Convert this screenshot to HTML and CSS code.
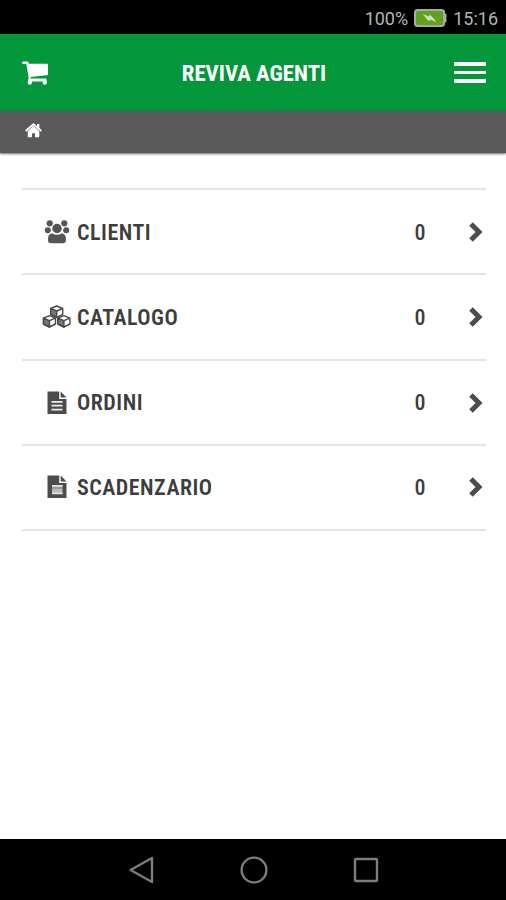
FILE: index.html
```html
<!DOCTYPE html>
<html lang="it">
<head>
    <meta charset="UTF-8">
    <meta name="viewport" content="width=device-width, initial-scale=1.0">
    <title>Reviva Agenti</title>
    <link rel="stylesheet" href="styles.css">
</head>
<body>
    <div class="status-bar">
        <span>100%</span>
        <svg class="battery" width="33" height="18" viewBox="0 0 33 18">
            <rect x="1" y="1" width="29" height="16" rx="2.5" fill="#5fa31c" stroke="#aaa" stroke-width="2"/>
            <path d="M31 5h1v8h-1z" fill="#aaa" stroke="#aaa"/>
            <path d="M8.500 5l6.500 2.500 1-2 6.500 7.500-6.500-2.500-1 2z" fill="#d5dccb"/>
        </svg>
        <span>15:16</span>
    </div>

    <header class="header">
        <a href="#" class="cart" aria-label="Carrello">
            <svg width="28" height="25" viewBox="0 0 28 25" fill="#fff">
                <path d="M1 .5h4.500q1 0 1.300 2.300H25q1 0 1 1V13q0 1-1 1.200L8.500 16l.2 1.500H23.500q1 0 1 1v2H7q-1.100 0-1-1.300l.7-2L4.300 3H1Q0 3 0 2T1 .5z"/>
                <circle cx="7.800" cy="21.500" r="2.200"/>
                <circle cx="22.800" cy="21.500" r="2.200"/>
            </svg>
        </a>
        <h1>REVIVA AGENTI</h1>
        <a href="#" class="menu" aria-label="Menu">
            <span></span>
            <span></span>
            <span></span>
        </a>
    </header>

    <nav class="breadcrumb">
        <a href="#" aria-label="Home">
            <svg width="17" height="15" viewBox="0 0 17 15" fill="#fff">
                <path d="M8.500 2.800l5.800 5.400v5.300q0 .8-.8.8H10v-4H7v4H3.500q-.8 0-.8-.8V8.200z"/>
                <path d="M.6 8l7.900-6.700L16.400 8" fill="none" stroke="#fff" stroke-width="1.800"/>
                <path d="M12 1h2.400v5L12 4z"/>
            </svg>
        </a>
    </nav>

    <main class="list">
        <a href="#" class="row">
            <svg class="icon" width="30" height="26" viewBox="0 0 30 26" fill="#555">
                <circle cx="7.700" cy="4.300" r="3.100"/>
                <circle cx="22.300" cy="4.300" r="3.100"/>
                <circle cx="5.800" cy="11.200" r="3"/>
                <circle cx="24.200" cy="11.200" r="3"/>
                <circle cx="15" cy="9.500" r="4.700"/>
                <path d="M10 14.300q5 3 10 0 3.900 1 3.900 5.500v1.500q0 3-3 3H9q-3 0-3-3v-1.500q0-4.500 4-5.500z"/>
            </svg>
            <span class="label">CLIENTI</span>
            <span class="count">0</span>
            <svg class="chevron" width="14" height="20" viewBox="0 0 14 20"><path d="M2 2l8 8-8 8"/></svg>
        </a>
        <a href="#" class="row">
            <svg class="icon" width="30" height="26" viewBox="0 0 30 26">
                <g id="cube" stroke="#484848" stroke-width="1.400" stroke-linejoin="round">
                    <path d="M8.700 4.500l6-2.500 6 2.500v5.800l-6 3-6-3z" fill="#fff"/>
                    <path d="M8.700 4.500l6 2.500v6.300l-6-3z" fill="#777"/>
                    <path d="M14.700 7l6-2.500" fill="none"/>
                </g>
                <use href="#cube" x="-7.200" y="9.700"/>
                <use href="#cube" x="7.200" y="9.700"/>
            </svg>
            <span class="label">CATALOGO</span>
            <span class="count">0</span>
            <svg class="chevron" width="14" height="20" viewBox="0 0 14 20"><path d="M2 2l8 8-8 8"/></svg>
        </a>
        <a href="#" class="row">
            <svg class="icon" width="30" height="26" viewBox="0 0 30 26">
                <path d="M5.500 1.500h11.700v7.500H24.500V24H5.500z" fill="#4c4c4c"/>
                <path d="M18.700 1.500l5.800 6h-5.800z" fill="#4c4c4c"/>
                <path d="M9.500 11.800h11M9.500 15.700h11M9.500 19.600h11" stroke="#eee" stroke-width="1.700"/>
            </svg>
            <span class="label">ORDINI</span>
            <span class="count">0</span>
            <svg class="chevron" width="14" height="20" viewBox="0 0 14 20"><path d="M2 2l8 8-8 8"/></svg>
        </a>
        <a href="#" class="row">
            <svg class="icon" width="30" height="26" viewBox="0 0 30 26">
                <path d="M5.500 1.500h11.700v7.500H24.500V24H5.500z" fill="#4c4c4c"/>
                <path d="M18.700 1.500l5.800 6h-5.800z" fill="#4c4c4c"/>
                <path d="M10 11h10.500v9H10z" fill="#bbb"/>
                <path d="M10 11.800h10.500M10 19.500h10.500" stroke="#e4e4e4" stroke-width="1.600"/>
                <path d="M10 14h10.500" stroke="#777"/>
            </svg>
            <span class="label">SCADENZARIO</span>
            <span class="count">0</span>
            <svg class="chevron" width="14" height="20" viewBox="0 0 14 20"><path d="M2 2l8 8-8 8"/></svg>
        </a>
    </main>

    <footer class="nav-bar">
        <svg width="28" height="28" viewBox="0 0 28 28"><path d="M2.500 14L24 2v24z"/></svg>
        <svg width="28" height="28" viewBox="0 0 28 28"><circle cx="14" cy="14" r="12.400"/></svg>
        <svg width="28" height="28" viewBox="0 0 28 28"><rect x="3" y="3" width="22" height="22" rx="1"/></svg>
    </footer>
</body>
</html>
```
FILE: styles.css
```css
* {
    margin: 0;
    padding: 0;
    box-sizing: border-box;
}

body {
    font-family: 'Roboto Condensed', Roboto, sans-serif;
    font-stretch: 75%;
    background: #fff;
    color: #3d3d3d;
    height: 100vh;
    display: flex;
    flex-direction: column;
    overflow: hidden;
}

a {
    color: inherit;
    text-decoration: none;
}

svg {
    display: block;
    flex: none;
}

.status-bar {
    height: 34px;
    padding: 2px 8px 0 0;
    display: flex;
    align-items: center;
    justify-content: flex-end;
    gap: 6px;
    background: #000;
    color: #b4b4b4;
    font-family: Roboto, sans-serif;
    font-size: 18px;
    font-stretch: 100%;
}

.header {
    height: 77px;
    padding: 2px 20px 0 22px;
    display: grid;
    grid-template-columns: 32px 1fr 32px;
    align-items: center;
    background: #04963b;
    color: #fff;
}

h1 {
    font-size: 22.8px;
    font-weight: 700;
    text-align: center;
    white-space: nowrap;
}

.menu {
    display: flex;
    flex-direction: column;
    gap: 5px;
    margin-top: -2px;
}

.menu span {
    height: 3.5px;
    border-radius: 1px;
    background: #fff;
}

.breadcrumb {
    height: 42px;
    padding: 12px 0 0 25px;
    background: #5a5a5a;
    box-shadow: 0 1px 2px rgba(0, 0, 0, 0.6);
}

.list {
    flex: 1;
    margin: 35px 20px 0 22px;
}

.row {
    height: 85.300px;
    padding: 1px 3px 0 20px;
    display: flex;
    align-items: center;
    border-top: 2px solid #e4e4e4;
}

.row:last-child {
    height: 87px;
    padding-top: 0;
    border-bottom: 2px solid #e4e4e4;
}

.label {
    flex: 1;
    margin-left: 5px;
    font-size: 22px;
    font-weight: 600;
    letter-spacing: 0.5px;
}

.count {
    width: 20px;
    margin-right: 39px;
    text-align: center;
    font-size: 22px;
    font-weight: 500;
}

.chevron {
    fill: none;
    stroke: #4d4d4d;
    stroke-width: 5;
}

.nav-bar {
    height: 61px;
    padding: 0 126px 0 128px;
    display: flex;
    align-items: center;
    justify-content: space-between;
    background: #000;
}

.nav-bar svg {
    fill: none;
    stroke: #7d7d7d;
    stroke-width: 2.400;
    stroke-linejoin: round;
}
```
